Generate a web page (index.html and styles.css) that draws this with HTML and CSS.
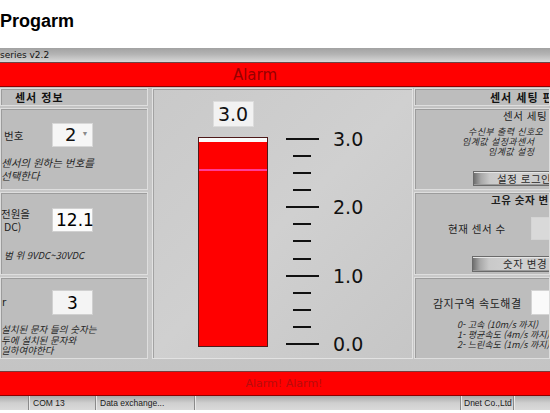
FILE: index.html
```html
<!DOCTYPE html>
<html lang="ko">
<head>
<meta charset="utf-8">
<title>Progarm</title>
<link rel="stylesheet" href="styles.css">
</head>
<body>
<h1 class="app-title">Progarm</h1>
<div class="window">
  <div class="titlebar">series v2.2</div>
  <div class="alarm alarm-top"><span>Alarm</span></div>
  <div class="main">
    <section class="side side-left">
      <div class="box box-head"><span class="head-text">센서 정보</span></div>
      <div class="box sec sec-1">
        <div class="field-row">
          <span class="label">번호</span>
          <div class="select"><span class="select-val">2</span><span class="caret">&#9660;</span></div>
        </div>
        <p class="note note-1">센서의 원하는 번호를<br>선택한다</p>
      </div>
      <div class="box sec sec-2">
        <div class="field-row">
          <span class="label label-2">전원을<br>&nbsp;DC)</span>
          <div class="input"><span class="cursor"></span>12.1</div>
        </div>
        <p class="note note-2">범 위 9VDC~30VDC</p>
      </div>
      <div class="box sec sec-3">
        <div class="field-row">
          <span class="label label-3">r</span>
          <div class="input input-3">3</div>
        </div>
        <p class="note note-3">설치된 문자 들의 숫자는<br>두에 설치된 문자와<br>일하여야한다</p>
      </div>
    </section>

    <section class="gauge-panel">
      <div class="gauge-col">
        <div class="value-box">3.0</div>
        <div class="bar">
          <div class="bar-empty"></div>
          <div class="bar-red bar-red-top"></div>
          <div class="bar-marker"></div>
          <div class="bar-red bar-red-fill"></div>
        </div>
      </div>
      <div class="scale">
        <div class="tick major"><span class="tick-line"></span><span class="tick-label">3.0</span></div>
        <div class="tick"><span class="tick-line"></span></div>
        <div class="tick"><span class="tick-line"></span></div>
        <div class="tick"><span class="tick-line"></span></div>
        <div class="tick major"><span class="tick-line"></span><span class="tick-label">2.0</span></div>
        <div class="tick"><span class="tick-line"></span></div>
        <div class="tick"><span class="tick-line"></span></div>
        <div class="tick"><span class="tick-line"></span></div>
        <div class="tick major"><span class="tick-line"></span><span class="tick-label">1.0</span></div>
        <div class="tick"><span class="tick-line"></span></div>
        <div class="tick"><span class="tick-line"></span></div>
        <div class="tick"><span class="tick-line"></span></div>
        <div class="tick major"><span class="tick-line"></span><span class="tick-label">0.0</span></div>
      </div>
    </section>

    <section class="side side-right">
      <div class="box box-head"><span class="head-text head-right">센서 세팅 판</span></div>
      <div class="box sec rsec-1">
        <div class="r-title">센서 세팅</div>
        <p class="rnote">
          <span class="rl rl-1">수신부 출력 신호오</span>
          <span class="rl rl-2">임계값 설정과센서</span>
          <span class="rl rl-3">임계값 설정</span>
        </p>
        <div class="btn btn-1">설정 로그인</div>
      </div>
      <div class="box sec rsec-2">
        <div class="r-title r-title-2">고유 숫자 변</div>
        <div class="r-row">
          <span class="r-label">현재 센서 수</span>
          <div class="r-input r-input-gray"></div>
        </div>
        <div class="btn btn-2">숫자 변경</div>
      </div>
      <div class="box sec rsec-3">
        <div class="r-row r-row-3">
          <span class="r-label r-label-3">감지구역 속도해결</span>
          <div class="r-input"></div>
        </div>
        <p class="speed-list">
          <span class="sl">0- 고속 (10m/s 까지)</span>
          <span class="sl">1- 평균속도 (4m/s 까지)</span>
          <span class="sl">2- 느린속도 (1m/s 까지)</span>
        </p>
      </div>
    </section>
  </div>
  <div class="alarm alarm-bottom"><span>Alarm! Alarm!</span></div>
  <div class="statusbar">
    <div class="cell c0"></div>
    <div class="cell c1">COM 13</div>
    <div class="cell c2">Data exchange...</div>
    <div class="cell c3"></div>
    <div class="cell c4">Dnet Co.,Ltd</div>
    <div class="cell c5"></div>
  </div>
</div>
</body>
</html>
```

FILE: styles.css
```css
* { box-sizing: border-box; }
html, body { margin: 0; padding: 0; }
body {
  width: 550px;
  height: 413px;
  overflow: hidden;
  background: #fff;
  font-family: "Liberation Sans", Arial, sans-serif;
  color: #1a1a1a;
}
.app-title {
  margin: 0;
  height: 48px;
  padding: 10px 0 0 0;
  font: bold 18px/22px "Liberation Sans", Arial, sans-serif;
  color: #000;
}
.window { width: 550px; }
.titlebar {
  height: 14px;
  background: linear-gradient(#a2a2a2, #b4b4b4 45%, #d8d8d8);
  font: 9px/14px "DejaVu Sans", sans-serif;
  color: #111;
  white-space: nowrap;
  overflow: hidden;
}
.alarm {
  background: #ff0000;
  display: flex;
  align-items: center;
  justify-content: center;
  font-family: "DejaVu Sans", sans-serif;
  white-space: nowrap;
}
.alarm-top {
  height: 25px;
  border-top: 1px solid #6d4646;
  border-bottom: 1px solid #8a0000;
  padding-right: 40px;
  font-size: 15px;
  color: #960000;
}
.alarm-bottom {
  height: 25px;
  border-top: 1px solid #7a3a3a;
  border-bottom: 1px solid #8a0000;
  padding-left: 18px;
  font-size: 11px;
  color: #b80c0c;
}
.main {
  height: 284px;
  padding-top: 1px;
  display: flex;
  align-items: flex-start;
  background: linear-gradient(#c2c2c2, #cbcbcb 60%, #c4c4c4);
}
.side {
  display: flex;
  flex-direction: column;
  gap: 2px;
  overflow: hidden;
}
.side-left { width: 148px; }
.side-right { width: 136px; margin-left: 1px; }
.box {
  background: #bdbdbd;
  border: 1px solid #dedede;
  box-shadow: inset 1px 1px 0 #9c9c9c;
  white-space: nowrap;
  overflow: hidden;
}
.box-head {
  height: 18px;
  font: bold 11px/16px "Noto Sans CJK KR", sans-serif;
  letter-spacing: 1px;
  color: #111;
}
.head-text { padding-left: 14px; }
.head-right { padding-left: 75px; }
.sec-1 { height: 82px; padding-top: 14px; }
.sec-2 { height: 83px; padding-top: 14px; }
.sec-3 { height: 82px; padding-top: 12px; }
.field-row {
  display: flex;
  align-items: center;
}
.label {
  width: 51px;
  padding-left: 3px;
  font: 10.5px/13px "Noto Sans CJK KR", sans-serif;
  color: #1e1e1e;
}
.label-2 { padding-left: 0; }
.label-3 { padding-left: 1px; font-family: "DejaVu Sans", sans-serif; }
.select {
  width: 41px;
  height: 24px;
  background: #f6f6f6;
  border: 1px solid #d8d8d8;
  display: flex;
  align-items: center;
  padding-left: 12px;
}
.select-val {
  font: 18px/22px "DejaVu Sans", sans-serif;
  color: #111;
}
.caret {
  font-size: 7px;
  color: #8a8a8a;
  margin-left: 5px;
  margin-top: -4px;
}
.input {
  width: 41px;
  height: 24px;
  background: #fbfbfb;
  border: 1px solid #d0d0d0;
  display: flex;
  align-items: center;
  padding-left: 2px;
  font: 17px/22px "DejaVu Sans", sans-serif;
  color: #000;
}
.cursor {
  width: 1px;
  height: 20px;
  background: #000;
  margin-right: 1px;
}
.input-3 {
  height: 25px;
  justify-content: center;
  padding-left: 0;
  background: #f4f4f4;
}
.note {
  margin: 0;
  font: italic 10.5px/13px "Noto Sans CJK KR", sans-serif;
  color: #262626;
}
.note-1 { margin-top: 9px; }
.note-2 { margin-top: 16px; padding-left: 3px; font-size: 9.5px; line-height: 12px; }
.note-3 { margin-top: 9px; font-size: 9.5px; line-height: 10.5px; }

/* center gauge */
.gauge-panel {
  width: 261px;
  height: 271px;
  margin-left: 4px;
  background: linear-gradient(135deg, #c9c9c9, #d0d0d0 50%, #c6c6c6);
  border: 1px solid #e2e2e2;
  box-shadow: inset 1px 1px 0 #a2a2a2;
  display: flex;
  align-items: flex-start;
  padding-left: 45px;
}
.gauge-col {
  width: 70px;
  display: flex;
  flex-direction: column;
  align-items: center;
  padding-top: 12px;
}
.value-box {
  width: 41px;
  height: 26px;
  background: #f2f2f2;
  border: 1px solid #dcdcdc;
  font: 19px/24px "DejaVu Sans", sans-serif;
  color: #111;
  text-align: center;
}
.bar {
  margin-top: 10px;
  width: 70px;
  height: 210px;
  border: 1px solid #4e1a1a;
  display: flex;
  flex-direction: column;
}
.bar-empty { height: 4px; background: #fafafa; }
.bar-red { background: #ff0000; }
.bar-red-top { height: 27px; }
.bar-marker { height: 2px; background: #ff3c96; }
.bar-red-fill { flex: 1; }
.scale {
  margin-left: 18px;
  margin-top: 49px;
  height: 207px;
  display: flex;
  flex-direction: column;
  justify-content: space-between;
}
.tick {
  height: 2px;
  display: flex;
  align-items: center;
}
.tick-line {
  display: block;
  width: 18px;
  height: 2px;
  margin-left: 7px;
  background: #111;
}
.major .tick-line { width: 33px; margin-left: 0; }
.tick-label {
  margin-left: 14px;
  font: 19px/22px "DejaVu Sans", sans-serif;
  color: #111;
}

/* right column */
.rsec-1 { height: 82px; }
.rsec-2 { height: 83px; }
.rsec-3 { height: 82px; }
.r-title {
  padding-left: 88px;
  font: 10.5px/14px "Noto Sans CJK KR", sans-serif;
  letter-spacing: 0.5px;
  color: #1e1e1e;
}
.r-title-2 { padding-left: 76px; font-weight: bold; }
.rnote {
  margin: 4px 0 0 0;
  display: flex;
  flex-direction: column;
  font: italic 9px/10px "Noto Sans CJK KR", sans-serif;
  letter-spacing: 0.4px;
  color: #262626;
}
.rl-1 { padding-left: 53px; }
.rl-2 { padding-left: 47px; }
.rl-3 { padding-left: 73px; }
.btn {
  height: 15px;
  margin-left: 58px;
  border: 1px solid #6a6a6a;
  border-right: 0;
  background:
    linear-gradient(to right, #707070, #a8a8a8 7px, #c9c9c9 16px, #d2d2d2 60%, #c8c8c8);
  box-shadow: inset 0 1px 0 #e6e6e6, inset 0 -1px 0 #9a9a9a;
  font: 10.5px/13px "Noto Sans CJK KR", sans-serif;
  letter-spacing: 0.5px;
  color: #2a2a2a;
}
.btn-1 { margin-top: 14px; padding-left: 23px; }
.btn-2 { margin-top: 16px; height: 16px; padding-left: 30px; margin-left: 57px; }
.r-row {
  display: flex;
  align-items: center;
  margin-top: 10px;
}
.r-label {
  width: 125px;
  padding-left: 33px;
  font: 10.5px/14px "Noto Sans CJK KR", sans-serif;
  letter-spacing: 0.5px;
  color: #1e1e1e;
}
.r-input {
  width: 20px;
  height: 25px;
  background: #fafafa;
  border: 1px solid #d4d4d4;
  border-right: 0;
}
.r-input-gray { height: 23px; background: #d9d9d9; }
.r-row-3 { margin-top: 12px; }
.r-label-3 { padding-left: 18px; font-size: 11px; }
.speed-list {
  margin: 5px 0 0 0;
  padding-left: 42px;
  display: flex;
  flex-direction: column;
  font: italic 9px/10px "Noto Sans CJK KR", sans-serif;
  color: #262626;
}

/* status bar */
.statusbar {
  height: 14px;
  display: flex;
  background: linear-gradient(#a9a9a9, #cfcfcf 50%, #dadada);
  font: 8.5px/14px "Liberation Sans", Arial, sans-serif;
  color: #1a1a1a;
  white-space: nowrap;
}
.cell {
  height: 14px;
  padding-left: 4px;
  border-left: 1px solid #8a8a8a;
  box-shadow: inset 1px 0 0 #e8e8e8;
  overflow: hidden;
}
.c0 { width: 28px; border-left: 0; box-shadow: none; }
.c1 { width: 67px; }
.c2 { width: 99px; }
.c3 { width: 266px; }
.c4 { width: 53px; padding-left: 3px; }
.c5 { flex: 1; }
```
